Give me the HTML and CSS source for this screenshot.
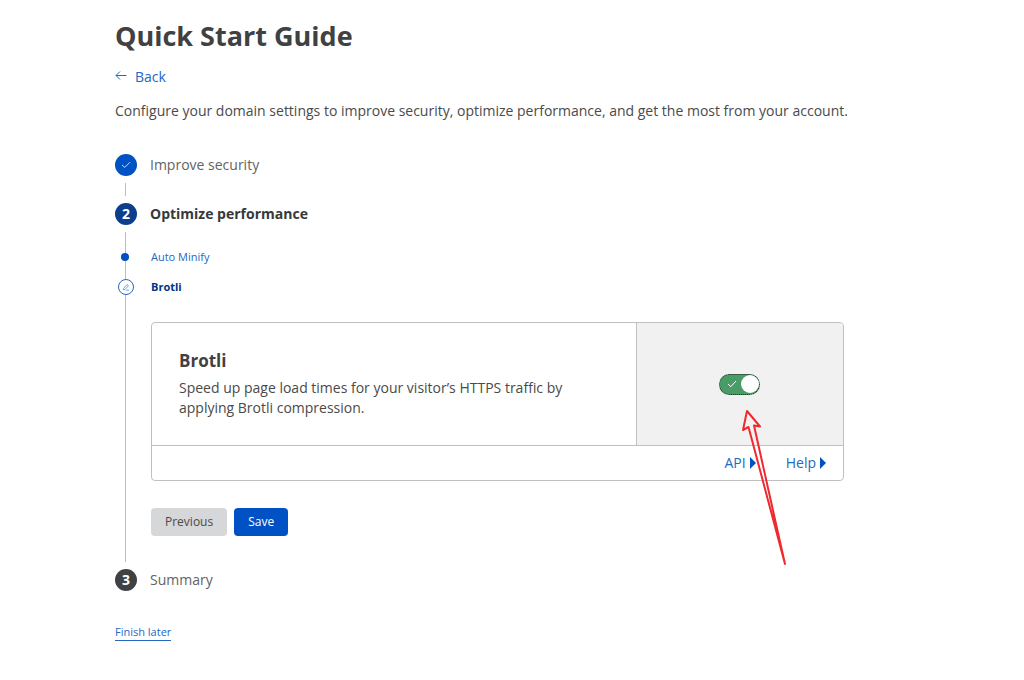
FILE: index.html
```html
<!doctype html>
<html lang="en">

<head>
    <meta charset="utf-8">
    <meta name="viewport" content="width=device-width, initial-scale=1">
    <title>Quick Start Guide</title>
    <link rel="stylesheet" href="styles.css">
</head>

<body>
    <main class="page">
        <h1 class="title">Quick Start Guide</h1>
        <a class="back" href="#">
            <svg width="12" height="12" viewBox="0 0 12 12" fill="none" stroke="currentColor" aria-hidden="true">
                <path d="M11.5 4.5H1M5 .5L1 4.500L5 8.500" />
            </svg>
            <span>Back</span>
        </a>
        <p class="intro">Configure your domain settings to improve security, optimize performance, and get the most from your account.</p>

        <ol class="steps">
            <li>
                <div class="step-head">
                    <span class="badge done">
                        <svg width="10" height="8" viewBox="0 0 12 10" fill="none" stroke="currentColor" aria-hidden="true">
                            <path d="M1 5L4.5 8L11 1.5" />
                        </svg>
                    </span>
                    <span>Improve security</span>
                </div>
                <div class="step-body"></div>
            </li>
            <li>
                <div class="step-head current">
                    <span class="badge">2</span>
                    <span>Optimize performance</span>
                </div>
                <div class="step-body open">
                    <ul class="substeps">
                        <li><span class="dot"></span><a href="#">Auto Minify</a></li>
                        <li class="active">
                            <span class="ring">
                                <svg width="8" height="8" viewBox="0 0 8 8" fill="none" stroke="currentColor" aria-hidden="true">
                                    <path stroke-width=".6" d="M1.500 5.500L5 1.500L6.400 2.700L3 6.500L1.200 6.800ZM4 7.200H7" />
                                </svg>
                            </span>
                            <a href="#">Brotli</a>
                        </li>
                    </ul>

                    <section class="card">
                        <div class="card-main">
                            <div class="card-text">
                                <h2>Brotli</h2>
                                <p>Speed up page load times for your visitor’s HTTPS traffic by applying Brotli compression.</p>
                            </div>
                            <div class="card-control">
                                <label class="toggle">
                                    <input type="checkbox" aria-label="Brotli" checked>
                                    <svg width="10" height="8" viewBox="0 0 10 8" fill="none" stroke="currentColor" aria-hidden="true">
                                        <path d="M1 4L3.8 6.7L9 1" />
                                    </svg>
                                    <span class="knob"></span>
                                </label>
                            </div>
                        </div>
                        <div class="card-foot">
                            <a href="#">API<span class="caret"></span></a>
                            <a href="#">Help<span class="caret"></span></a>
                        </div>
                        <!-- hint arrow pointing at the toggle -->
                        <svg class="arrow" width="50" height="160" viewBox="0 0 50 160" fill="none" stroke="#ee2a30" stroke-width="2" stroke-linejoin="round" aria-hidden="true">
                            <path d="M45 156L14 17.500L20 18.500L7 3L3 22L8.500 19Z" />
                        </svg>
                    </section>

                    <div class="actions">
                        <button type="button" class="btn">Previous</button>
                        <button type="button" class="btn primary">Save</button>
                    </div>
                </div>
            </li>
            <li>
                <div class="step-head">
                    <span class="badge pending">3</span>
                    <span>Summary</span>
                </div>
            </li>
        </ol>

        <a class="finish" href="#">Finish later</a>
    </main>
</body>

</html>
```
FILE: styles.css
```css
* {
    box-sizing: border-box;
}
body {
    margin: 0;
    background: #fff;
    color: #4a4a4a;
    font: 14px/20px "Open Sans", "Noto Sans", sans-serif;
}
h1, h2, p, ol, ul {
    margin: 0;
    padding: 0;
}
ol, ul {
    list-style: none;
}
a {
    color: #2468c4;
    text-decoration: none;
}
.page {
    padding: 16px 115px 32px;
}
.title {
    color: #404142;
    font-size: 27px;
    line-height: 40px;
}
.back {
    display: flex;
    align-items: center;
    gap: 8px;
    width: max-content;
    margin-top: 11px;
}
.intro {
    margin-top: 14px;
}

/* stepper */
.steps {
    margin-top: 33px;
    padding-right: 65px;
}
.step-head {
    display: flex;
    align-items: center;
    gap: 13px;
    height: 22px;
    color: #626364;
}
.step-head.current {
    color: #36393a;
    font-weight: bold;
}
.badge {
    display: flex;
    align-items: center;
    justify-content: center;
    width: 22px;
    height: 22px;
    border-radius: 50%;
    background: #0c3e8c;
    color: #fff;
    font-weight: bold;
}
.badge.done {
    background: #0051c3;
}
.badge.pending {
    background: #404142;
}
.step-body {
    min-height: 13px;
    margin: 7px 0 7px 10px;
    border-left: 1px solid #bcbdbd;
}
.step-body.open {
    padding: 10px 0 26px 25px;
}
.substeps {
    font-size: 11px;
}
.substeps li {
    display: flex;
    align-items: center;
    position: relative;
    height: 30px;
}
.active a {
    color: #003682;
    font-weight: bold;
}
.dot, .ring {
    position: absolute;
    border-radius: 50%;
}
.dot {
    left: -30px;
    width: 8px;
    height: 8px;
    background: #0051c3;
}
.ring {
    display: flex;
    align-items: center;
    justify-content: center;
    left: -33px;
    width: 16px;
    height: 16px;
    border: 1px solid #2468c4;
    background: #fff;
    color: #2468c4;
}

/* setting card */
.card {
    position: relative;
    margin-top: 20px;
    border: 1px solid #bfc1c1;
    border-radius: 4px;
}
.card-main {
    display: grid;
    grid-template-columns: 7fr 3fr;
    border-bottom: 1px solid #bfc1c1;
}
.card-text {
    padding: 27px;
}
.card-text h2 {
    color: #404142;
    font-size: 17px;
    line-height: 22px;
}
.card-text p {
    margin-top: 6px;
}
.card-control {
    display: flex;
    align-items: center;
    justify-content: center;
    border-left: 1px solid #bfc1c1;
    border-radius: 0 3px 0 0;
    background: #f1f1f1;
}
.toggle {
    display: flex;
    align-items: center;
    justify-content: space-between;
    position: relative;
    width: 41px;
    height: 21px;
    padding: 0 1px 0 8px;
    color: #fff;
}
.toggle input {
    position: absolute;
    inset: 0;
    width: 100%;
    height: 100%;
    margin: 0;
    appearance: none;
    border: 1px dotted #222;
    border-radius: 11px;
    background: #4a9c67;
}
.toggle svg, .knob {
    position: relative;
    pointer-events: none;
}
.knob {
    width: 18px;
    height: 18px;
    border-radius: 50%;
    background: #fff;
}
.card-foot {
    display: flex;
    justify-content: flex-end;
    gap: 30px;
    padding: 7px 17px;
}
.card-foot a {
    display: flex;
    align-items: center;
    gap: 4px;
}
.caret {
    border: 6px solid transparent;
    border-left-color: #0051c3;
    border-right: 0;
}
.arrow {
    position: absolute;
    top: 85px;
    right: 53px;
    pointer-events: none;
}

.actions {
    display: flex;
    gap: 7px;
    margin-top: 27px;
}
.btn {
    height: 28px;
    padding: 0 14px;
    border: 0;
    border-radius: 4px;
    background: #d5d7d8;
    color: #4a4a4a;
    font: inherit;
    font-size: 12px;
}
.btn.primary {
    background: #0051c3;
    color: #fff;
}
.finish {
    display: inline-block;
    margin-top: 33px;
    border-bottom: 1px solid #2468c4;
    font-size: 11px;
    line-height: 16px;
}
```
